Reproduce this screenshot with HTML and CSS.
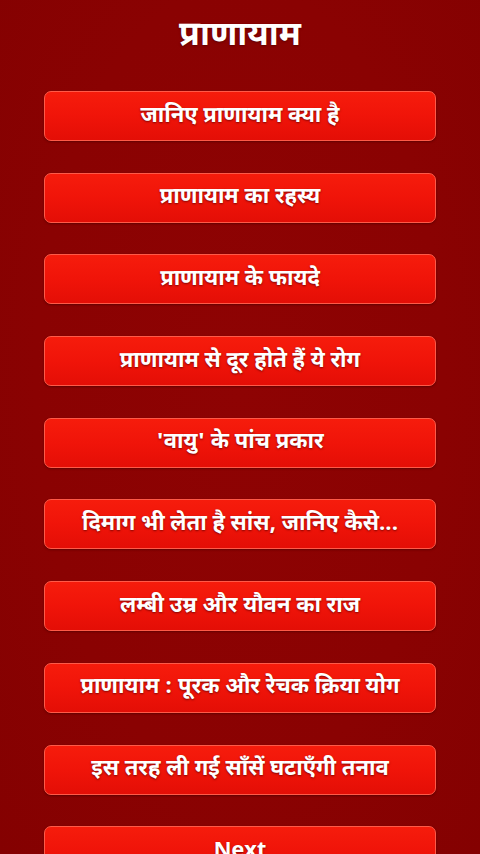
FILE: index.html
```html
<!DOCTYPE html>
<html lang="hi">
<head>
<meta charset="utf-8">
<link rel="stylesheet" href="styles.css">
</head>
<body>
<div class="screen">
  <h1 class="title">प्राणायाम</h1>
  <div class="menu">
    <div class="btn">जानिए प्राणायाम क्या है</div>
    <div class="btn">प्राणायाम का रहस्य</div>
    <div class="btn">प्राणायाम के फायदे</div>
    <div class="btn">प्राणायाम से दूर होते हैं ये रोग</div>
    <div class="btn">'वायु' के पांच प्रकार</div>
    <div class="btn">दिमाग भी लेता है सांस, जानिए कैसे...</div>
    <div class="btn">लम्बी उम्र और यौवन का राज</div>
    <div class="btn">प्राणायाम : पूरक और रेचक क्रिया योग</div>
    <div class="btn">इस तरह ली गई साँसें घटाएँगी तनाव</div>
    <div class="btn">Next</div>
  </div>
</div>
</body>
</html>
```
FILE: styles.css
```css
html, body {
  margin: 0;
  padding: 0;
  height: 100%;
  overflow: hidden;
}
body {
  background: #8a0202;
  font-family: "Noto Sans Devanagari", "Noto Sans", "Roboto", sans-serif;
  color: #fff;
}
.screen {
  width: 480px;
  height: 854px;
  background: radial-gradient(ellipse at 50% 45%, #8e0303 0%, #8a0202 60%, #840101 100%);
}
.title {
  margin: 0;
  padding-top: 12px;
  height: 91px;
  box-sizing: border-box;
  text-align: center;
  font-size: 34px;
  font-weight: 700;
  line-height: 50px;
  text-shadow: 0 1px 2px rgba(60,0,0,0.6);
}
.menu {
  display: flex;
  flex-direction: column;
  gap: 31.7px;
  margin: 0 44px;
}
.btn {
  height: 50px;
  box-sizing: border-box;
  border: 1.5px solid #ff5a48;
  border-radius: 7px;
  background: linear-gradient(to bottom, #f61c0c 0%, #f01409 50%, #e40e06 100%);
  box-shadow: 0 1px 2px rgba(40,0,0,0.4);
  display: flex;
  align-items: center;
  justify-content: center;
  font-size: 22px;
  font-weight: 700;
  text-shadow: 0 1px 2px rgba(80,0,0,0.7);
  white-space: nowrap;
}
```
